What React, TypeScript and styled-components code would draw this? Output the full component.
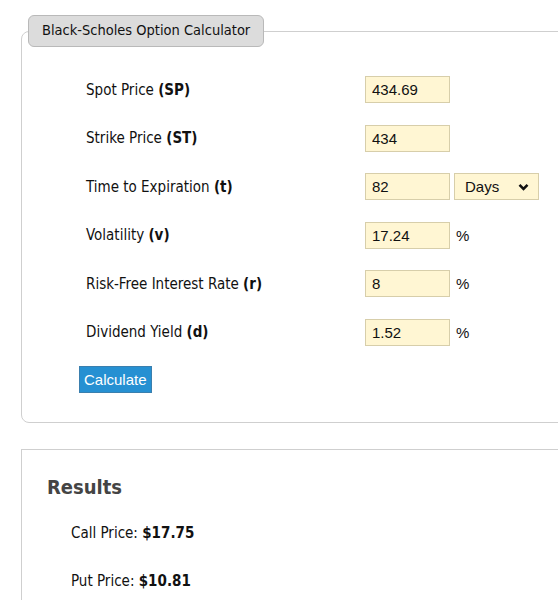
import React from "react";
import styled, { createGlobalStyle } from "styled-components";

const Global = createGlobalStyle`
  html, body { margin: 0; padding: 0; background: #fff; overflow: hidden; }
  body { font-family: "DejaVu Sans Condensed", "DejaVu Sans", Tahoma, sans-serif; font-stretch: condensed; color: #111; }
`;

const Page = styled.div`
  padding: 15px 0 0 21px;
  width: 620px;
`;

const Fieldset = styled.fieldset`
  margin: 0;
  border: 1px solid #cfcfcf;
  border-radius: 8px;
  padding: 29px 0 29px 0;
  min-width: 0;
`;

const Legend = styled.legend`
  margin-left: 6px;
  padding: 6px 13px 7px;
  background: #dcdcdc;
  border: 1px solid #b9b9b9;
  border-radius: 6px;
  font-size: 14.5px;
  line-height: 17px;
  color: #111;
`;

const Form = styled.div`
  display: grid;
  grid-template-columns: 279px 85px auto;
  row-gap: 21.5px;
  align-items: center;
  padding-left: 64px;
`;

const Label = styled.label`
  font-size: 15px;
  color: #111;
`;

const Input = styled.input`
  box-sizing: border-box;
  width: 85px;
  height: 27px;
  background: #fff6d3;
  border: 1px solid #d7ceaa;
  padding: 0 6px;
  font-family: "Liberation Sans", Arial, sans-serif;
  font-size: 15px;
  color: #111;
  outline: none;
`;

const Extra = styled.div`
  display: flex;
  align-items: center;
  padding-left: 4px;
`;

const Unit = styled.span`
  font-family: "Liberation Sans", Arial, sans-serif;
  font-size: 15px;
  color: #111;
  padding-left: 2px;
`;

const SelectWrap = styled.div`
  position: relative;
  width: 85px;
  height: 27px;
`;

const Select = styled.select`
  appearance: none;
  box-sizing: border-box;
  width: 100%;
  height: 100%;
  background: #fff6d3;
  border: 1px solid #d7ceaa;
  padding: 0 0 0 10px;
  font-family: "Liberation Sans", Arial, sans-serif;
  font-size: 15px;
  color: #111;
  border-radius: 0;
  outline: none;
`;

const Chevron = styled.svg`
  position: absolute;
  right: 10px;
  top: 10px;
  pointer-events: none;
`;

const ButtonRow = styled.div`
  padding: 20px 0 0 57px;
`;

const Button = styled.button`
  box-sizing: border-box;
  height: 27px;
  padding: 0 4px;
  background: #2690d2;
  border: 1px solid #3a7fae;
  color: #fff;
  font-family: "Liberation Sans", Arial, sans-serif;
  font-size: 15px;
  border-radius: 0;
`;

const Results = styled.section`
  margin-top: 26px;
  border: 1px solid #cfcfcf;
  border-right: none;
  padding: 24px 0 0 25px;
  height: 200px;
`;

const Heading = styled.h2`
  margin: 0;
  font-size: 20px;
  font-weight: bold;
  color: #444;
  line-height: 26px;
`;

const ResultLine = styled.p<{ $top: number }>`
  margin: 0;
  padding-left: 24px;
  font-size: 15px;
  line-height: 20px;
  margin-top: ${(p) => p.$top}px;
`;

const rows: { label: string; sym: string; value: string; extra?: "days" | "pct" }[] = [
  { label: "Spot Price", sym: "(SP)", value: "434.69" },
  { label: "Strike Price", sym: "(ST)", value: "434" },
  { label: "Time to Expiration", sym: "(t)", value: "82", extra: "days" },
  { label: "Volatility", sym: "(v)", value: "17.24", extra: "pct" },
  { label: "Risk-Free Interest Rate", sym: "(r)", value: "8", extra: "pct" },
  { label: "Dividend Yield", sym: "(d)", value: "1.52", extra: "pct" },
];

export default function App() {
  return (
    <Page>
      <Global />
      <Fieldset>
        <Legend>Black-Scholes Option Calculator</Legend>
        <Form>
          {rows.map((r) => (
            <React.Fragment key={r.label}>
              <Label>
                {r.label} <b>{r.sym}</b>
              </Label>
              <Input defaultValue={r.value} />
              <Extra>
                {r.extra === "days" && (
                  <SelectWrap>
                    <Select defaultValue="Days">
                      <option>Days</option>
                      <option>Years</option>
                    </Select>
                    <Chevron width="11" height="8" viewBox="0 0 11 8">
                      <path d="M1.5 1.8 L5.5 5.8 L9.5 1.8" fill="none" stroke="#111" strokeWidth="2.6" />
                    </Chevron>
                  </SelectWrap>
                )}
                {r.extra === "pct" && <Unit>%</Unit>}
              </Extra>
            </React.Fragment>
          ))}
        </Form>
        <ButtonRow>
          <Button>Calculate</Button>
        </ButtonRow>
      </Fieldset>
      <Results>
        <Heading>Results</Heading>
        <ResultLine $top={23}>
          Call Price: <b>$17.75</b>
        </ResultLine>
        <ResultLine $top={28}>
          Put Price: <b>$10.81</b>
        </ResultLine>
      </Results>
    </Page>
  );
}
